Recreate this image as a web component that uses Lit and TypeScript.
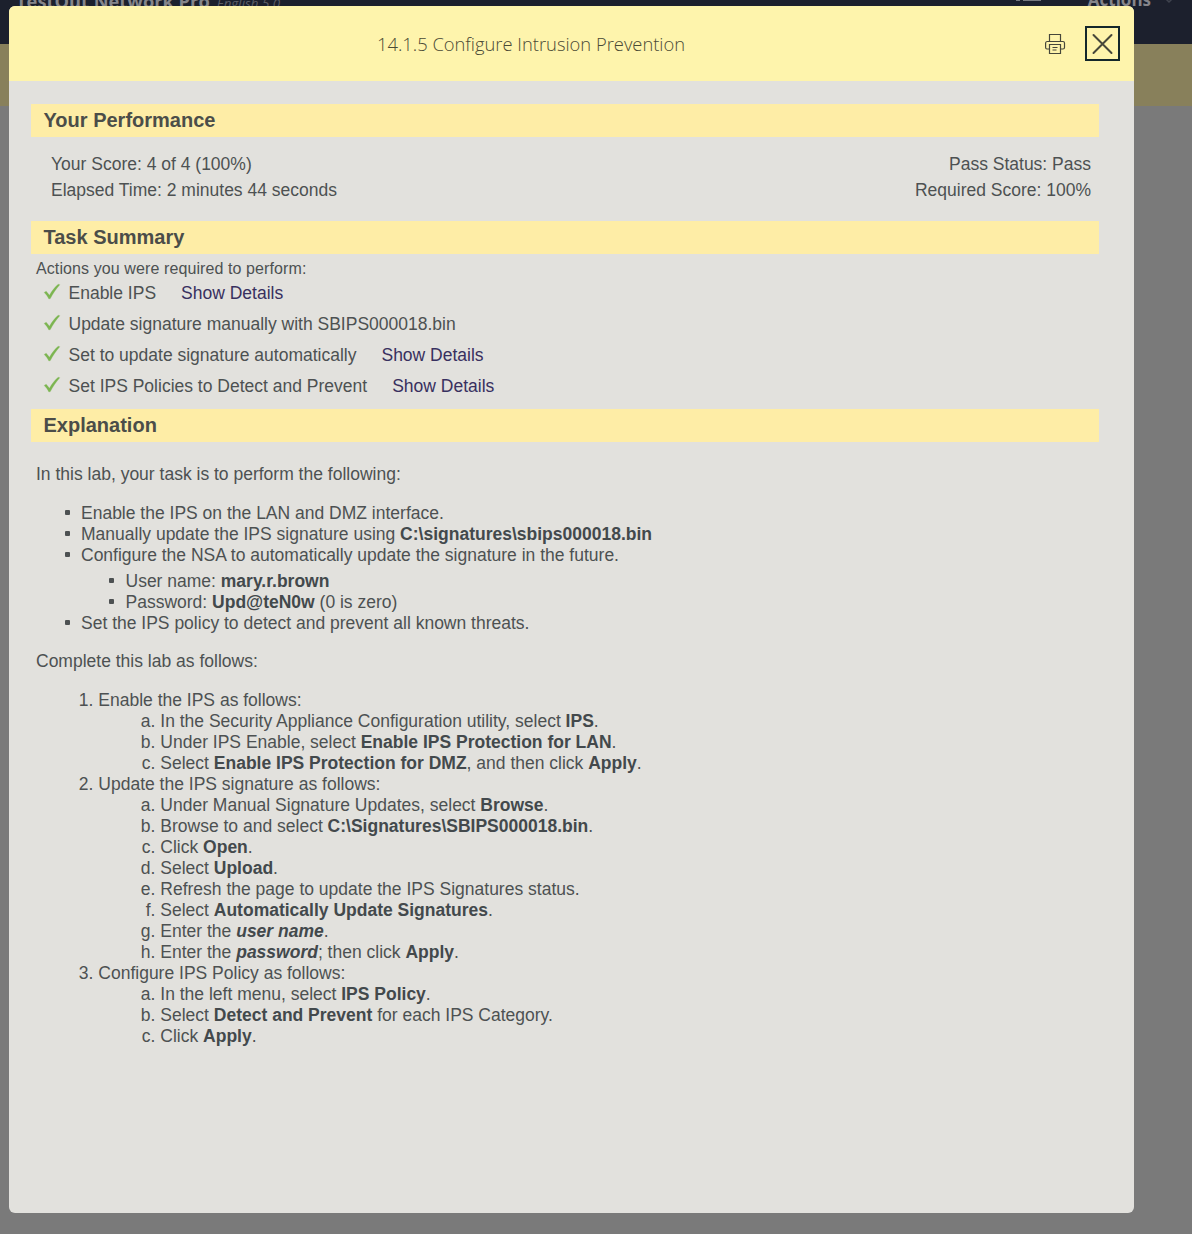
import { LitElement, html, css } from "lit";
import { customElement } from "lit/decorators.js";

interface Task {
  label: string;
  details: boolean;
}

const TASKS: Task[] = [
  { label: "Enable IPS", details: true },
  { label: "Update signature manually with SBIPS000018.bin", details: false },
  { label: "Set to update signature automatically", details: true },
  { label: "Set IPS Policies to Detect and Prevent", details: true },
];

@customElement("app-root")
export class AppRoot extends LitElement {
  static styles = css`
    :host {
      display: block;
      position: relative;
      height: 1234px;
      overflow: hidden;
      background: #7a7a7a;
      font-family: "Liberation Sans", Arial, sans-serif;
      font-size: 17.5px;
      line-height: 21px;
      color: #4d5152;
    }
    .topbar {
      display: flex;
      justify-content: space-between;
      box-sizing: border-box;
      height: 44px;
      padding: 0 17px 0 16px;
      background: #1c202d;
      color: #85858a;
      font-family: "Open Sans", sans-serif;
      overflow: hidden;
      white-space: nowrap;
    }
    .brand, .menu {
      display: flex;
      height: 24px;
      margin-top: -11px;
      line-height: 24px;
      font-size: 18.3px;
      font-weight: 700;
    }
    .brand { gap: 7px; }
    .edition { font-size: 13.4px; font-weight: 400; font-style: italic; line-height: 28px; color: #5b5d65; }
    .menu { gap: 44px; font-size: 17px; line-height: 22px; }
    .menu svg { display: block; }
    .menu-label { display: flex; gap: 12px; }
    .band { height: 62px; background: #88805b; }
    .dialog {
      position: absolute;
      left: 9px;
      top: 6px;
      width: 1125px;
      height: 1207px;
      border-radius: 6px;
      overflow: hidden;
      background: #e2e1dd;
    }
    .header {
      display: grid;
      grid-template-columns: 1fr auto;
      align-items: center;
      height: 75px;
      box-sizing: border-box;
      padding-right: 14px;
      background: #fef4ac;
    }
    .title {
      margin: 0;
      padding-left: 368px;
      font: 300 18.35px/24px "Open Sans", sans-serif;
      color: #4a4a35;
      white-space: nowrap;
    }
    .tools { display: flex; align-items: center; gap: 19px; }
    .tool { display: block; padding: 0; border: 0; background: none; color: #46473a; }
    .tool svg { display: block; }
    .close { border: 2px solid #14272b; width: 35px; height: 35px; box-sizing: border-box; }
    .body { padding: 23px 35px 0 22px; }
    .section {
      margin: 0;
      height: 33px;
      box-sizing: border-box;
      padding: 0 12.5px;
      background: #feeda6;
      font-size: 20px;
      font-weight: 700;
      line-height: 33px;
      color: #4b4d49;
    }
    .scores {
      display: flex;
      justify-content: space-between;
      padding: 14px 8px 18px 20px;
      line-height: 26px;
    }
    .right { text-align: right; }
    .lead { padding: 5px 5px 0; font-size: 16px; line-height: 20px; letter-spacing: 0.1px; }
    .tasks { list-style: none; margin: 0 0 7px; padding: 0 0 0 12px; }
    .task { display: flex; align-items: center; height: 31px; }
    .tasks .task:first-child { height: 28px; padding-bottom: 2px; }
    .check { width: 18px; height: 18px; margin: -3px 7.5px 0 0; display: block; }
    .link { margin-left: 25px; color: #38305f; text-decoration: none; }
    .para { margin: 0; padding-left: 5px; }
    .first { margin-top: 22px; }
    .bullets { list-style: none; margin: 18px 0 17px; padding-left: 50px; }
    .sub { list-style: none; margin: 5px 0 0; padding-left: 44.5px; }
    .bullets li::before {
      content: "";
      display: inline-block;
      width: 5px;
      height: 5px;
      margin: 0 11.5px 0 -16.5px;
      vertical-align: 4px;
      border-radius: 1px;
      background: #4d5152;
    }
    .steps { margin: 18px 0 0; padding-left: 67.3px; }
    .letters { list-style: lower-alpha; margin: 0; padding-left: 62px; }
    b { color: #43494c; }
  `;

  private check() {
    return html`<svg class="check" viewBox="0 0 18 18" aria-hidden="true">
      <path d="M1.2 9.4 3.2 8.3 6.5 12.2 C8.8 8 11.8 4.2 15.2 1.3 L16.8 1.7 C13 6 9.8 10.7 7.3 15.6 L5.9 15.9 C4.7 13.5 3.2 11.4 1.2 9.4Z" fill="#7cb550" stroke="#7cb550" stroke-width=".3"/>
    </svg>`;
  }

  render() {
    return html`
      <div class="topbar">
        <div class="brand"><span>TestOut Network Pro</span><span class="edition">English 5.0</span></div>
        <div class="menu">
          <svg width="30" height="14" viewBox="0 0 30 14"><path d="M2 11h4M9 11h18" stroke="#777980" stroke-width="2"/></svg>
          <div class="menu-label"><span>Actions</span>
            <svg width="12" height="15" viewBox="0 0 12 15"><path d="M3 10 6 13 9 10" fill="none" stroke="#3f434e" stroke-width="1.5"/></svg>
          </div>
        </div>
      </div>
      <div class="band"></div>

      <section class="dialog" role="dialog">
        <header class="header">
          <h1 class="title">14.1.5 Configure Intrusion Prevention</h1>
          <div class="tools">
            <button class="tool" aria-label="Print">
              <svg width="22" height="22" viewBox="0 0 22 22" fill="none" stroke="currentColor" stroke-width="1.2">
                <path d="M5.5 8.5v-7h11v7M5.5 16H3a1.5 1.5 0 0 1-1.4-1.5V10A1.6 1.6 0 0 1 3 8.5h16a1.6 1.6 0 0 1 1.5 1.5v4.5A1.5 1.5 0 0 1 19 16h-2.5M5.5 11.5h11v9h-11zM8.5 14.5h5M8.5 17h4"/>
              </svg>
            </button>
            <button class="tool close" aria-label="Close">
              <svg width="31" height="31" viewBox="0 0 31 31" fill="none" stroke="currentColor" stroke-width="2" stroke-linecap="round"><path d="M6.5 7 24.5 25M24.5 7 6.5 25"/></svg>
            </button>
          </div>
        </header>

        <div class="body">
          <h2 class="section">Your Performance</h2>
          <div class="scores">
            <div><div>Your Score: 4 of 4 (100%)</div><div>Elapsed Time: 2 minutes 44 seconds</div></div>
            <div class="right"><div>Pass Status: Pass</div><div>Required Score: 100%</div></div>
          </div>

          <h2 class="section">Task Summary</h2>
          <div class="lead">Actions you were required to perform:</div>
          <ul class="tasks">
            ${TASKS.map(
              (t) => html`<li class="task">${this.check()}<span>${t.label}</span>${t.details ? html`<a class="link">Show Details</a>` : ""}</li>`
            )}
          </ul>

          <h2 class="section">Explanation</h2>
          <p class="para first">In this lab, your task is to perform the following:</p>
          <ul class="bullets">
            <li>Enable the IPS on the LAN and DMZ interface.</li>
            <li>Manually update the IPS signature using <b>C:\\signatures\\sbips000018.bin</b></li>
            <li>Configure the NSA to automatically update the signature in the future.
              <ul class="sub">
                <li>User name: <b>mary.r.brown</b></li>
                <li>Password: <b>Upd@teN0w</b> (0 is zero)</li>
              </ul>
            </li>
            <li>Set the IPS policy to detect and prevent all known threats.</li>
          </ul>
          <p class="para">Complete this lab as follows:</p>
          <ol class="steps">
            <li>Enable the IPS as follows:
              <ol class="letters">
                <li>In the Security Appliance Configuration utility, select <b>IPS</b>.</li>
                <li>Under IPS Enable, select <b>Enable IPS Protection for LAN</b>.</li>
                <li>Select <b>Enable IPS Protection for DMZ</b>, and then click <b>Apply</b>.</li>
              </ol>
            </li>
            <li>Update the IPS signature as follows:
              <ol class="letters">
                <li>Under Manual Signature Updates, select <b>Browse</b>.</li>
                <li>Browse to and select <b>C:\\Signatures\\SBIPS000018.bin</b>.</li>
                <li>Click <b>Open</b>.</li>
                <li>Select <b>Upload</b>.</li>
                <li>Refresh the page to update the IPS Signatures status.</li>
                <li>Select <b>Automatically Update Signatures</b>.</li>
                <li>Enter the <b><i>user name</i></b>.</li>
                <li>Enter the <b><i>password</i></b>; then click <b>Apply</b>.</li>
              </ol>
            </li>
            <li>Configure IPS Policy as follows:
              <ol class="letters">
                <li>In the left menu, select <b>IPS Policy</b>.</li>
                <li>Select <b>Detect and Prevent</b> for each IPS Category.</li>
                <li>Click <b>Apply</b>.</li>
              </ol>
            </li>
          </ol>
        </div>
      </section>
    `;
  }
}
